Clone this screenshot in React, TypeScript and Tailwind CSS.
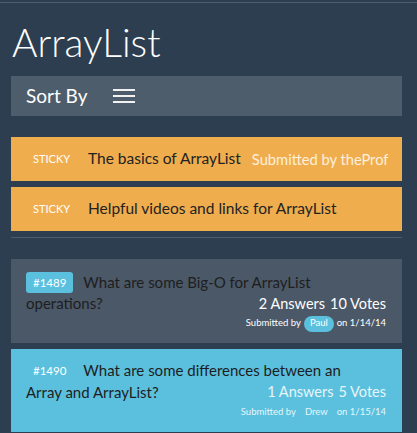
export default function App() {
  return (
    <div className="min-h-[433px] w-[417px] bg-[#2c3e50] font-['Lato',_sans-serif] overflow-hidden">
      <div className="h-[2px]" />
      <div className="h-px bg-[#4e5d6c]" />
      <div className="pl-[11px] pr-[15px]">
        <h1 className="mt-[18px] text-[39px] leading-[43px] font-light text-white pl-px">ArrayList</h1>
        <div className="mt-[12px] h-[40px] bg-[#4e5d6c] flex items-center pl-[15px]">
          <span className="text-[19px] text-white">Sort By</span>
          <div className="ml-[26px] flex flex-col gap-[4px]">
            <div className="h-[2px] w-[22px] bg-[#f2f2f2]" />
            <div className="h-[2px] w-[22px] bg-[#f2f2f2]" />
            <div className="h-[2px] w-[22px] bg-[#f2f2f2]" />
          </div>
        </div>
        <div className="mt-[21px] flex flex-col gap-[6px]">
          <div className="h-[44px] bg-[#f0ad4e] flex items-center pl-[22px]">
            <span className="text-[11px] text-white w-[55px]">STICKY</span>
            <span className="text-[15.5px] text-[#222]">The basics of ArrayList</span>
            <span className="text-[14.7px] text-[#fdf0dd] ml-[11px]">Submitted by theProf</span>
          </div>
          <div className="h-[44px] bg-[#f0ad4e] flex items-center pl-[22px]">
            <span className="text-[11px] text-white w-[55px]">STICKY</span>
            <span className="text-[15.5px] text-[#222]">Helpful videos and links for ArrayList</span>
          </div>
        </div>
        <div className="mt-[6px] h-px bg-[#4e5d6c]" />
        <div className="mt-[21px] bg-[#4b5868] pl-[15px] pr-[16px] pt-[13px] pb-[10px]">
          <div className="flex items-center h-[21px]">
            <span className="h-[21px] px-[7px] rounded-[3px] bg-[#5bc0de] text-white text-[11.5px] flex items-center">#1489</span>
            <span className="ml-[10px] text-[15px] text-[#1e1e1e]">What are some Big-O for ArrayList</span>
          </div>
          <div className="flex justify-between items-center h-[21px]">
            <span className="text-[15px] text-[#1e1e1e]">operations?</span>
            <span className="text-[14.5px] text-white flex gap-[5px]"><span>2 Answers</span><span>10 Votes</span></span>
          </div>
          <div className="flex justify-end items-center h-[19px] text-[9.5px] text-white">
            <span>Submitted by</span>
            <span className="mx-[3px] px-[6px] h-[16px] rounded-full bg-[#5bc0de] flex items-center">Paul</span>
            <span>on 1/14/14</span>
          </div>
        </div>
        <div className="mt-[6px] bg-[#5bc0de] pl-[15px] pr-[16px] pt-[11px] pb-[10px]">
          <div className="flex items-center h-[21px]">
            <span className="h-[21px] px-[7px] rounded-[3px] bg-[#5bc0de] text-white text-[11.5px] flex items-center">#1490</span>
            <span className="ml-[10px] text-[15px] text-[#1e1e1e]">What are some differences between an</span>
          </div>
          <div className="flex justify-between items-center h-[22px]">
            <span className="text-[15px] text-[#1e1e1e]">Array and ArrayList?</span>
            <span className="text-[14.5px] text-[#e6f5fa] flex gap-[5px]"><span>1 Answers</span><span>5 Votes</span></span>
          </div>
          <div className="flex justify-end items-center h-[19px] text-[9.5px] text-[#e6f5fa]">
            <span>Submitted by</span>
            <span className="mx-[3px] px-[6px] h-[16px] rounded-full bg-[#5bc0de] flex items-center">Drew</span>
            <span>on 1/15/14</span>
          </div>
        </div>
      </div>
    </div>
  );
}
